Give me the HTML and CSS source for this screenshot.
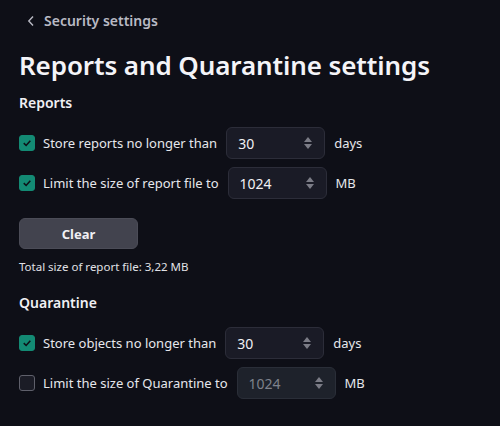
FILE: index.html
```html
<!DOCTYPE html>
<html>
<head>
<meta charset="utf-8">
<link rel="stylesheet" href="styles.css">
</head>
<body>
<div class="page">
  <div class="back">
    <svg class="chev" width="8" height="12" viewBox="0 0 8 12"><path d="M6 1.5 L1.8 6 L6 10.5" fill="none" stroke="#b9bac4" stroke-width="1.4"/></svg>
    <span>Security settings</span>
  </div>
  <h1 class="title">Reports and Quarantine settings</h1>

  <h2 class="section">Reports</h2>
  <div class="rows">
    <div class="row">
      <span class="cb on"><svg width="16" height="16" viewBox="0 0 16 16"><path d="M4.3 8.2 L7 10.8 L11.8 5.4" fill="none" stroke="#0e0f17" stroke-width="1.8"/></svg></span>
      <span class="label">Store reports no longer than</span>
      <span class="num"><span class="val">30</span><span class="spin"><i class="up"></i><i class="dn"></i></span></span>
      <span class="unit">days</span>
    </div>
    <div class="row">
      <span class="cb on"><svg width="16" height="16" viewBox="0 0 16 16"><path d="M4.3 8.2 L7 10.8 L11.8 5.4" fill="none" stroke="#0e0f17" stroke-width="1.8"/></svg></span>
      <span class="label">Limit the size of report file to</span>
      <span class="num"><span class="val">1024</span><span class="spin"><i class="up"></i><i class="dn"></i></span></span>
      <span class="unit">MB</span>
    </div>
  </div>
  <button class="btn">Clear</button>
  <div class="note">Total size of report file: 3,22 MB</div>

  <h2 class="section q">Quarantine</h2>
  <div class="rows">
    <div class="row">
      <span class="cb on"><svg width="16" height="16" viewBox="0 0 16 16"><path d="M4.3 8.2 L7 10.8 L11.8 5.4" fill="none" stroke="#0e0f17" stroke-width="1.8"/></svg></span>
      <span class="label">Store objects no longer than</span>
      <span class="num"><span class="val">30</span><span class="spin"><i class="up"></i><i class="dn"></i></span></span>
      <span class="unit">days</span>
    </div>
    <div class="row">
      <span class="cb"></span>
      <span class="label">Limit the size of Quarantine to</span>
      <span class="num dis"><span class="val">1024</span><span class="spin"><i class="up"></i><i class="dn"></i></span></span>
      <span class="unit">MB</span>
    </div>
  </div>
</div>
</body>
</html>
```

FILE: styles.css
```css
html, body {
  margin: 0;
  background: #0e0f17;
}
body {
  width: 500px;
  height: 426px;
  overflow: hidden;
  font-family: "Noto Sans", "Open Sans", sans-serif;
  color: #ecedf2;
}
.page {
  padding: 10px 19px 0 19px;
}
.back {
  display: flex;
  align-items: center;
  gap: 9px;
  height: 21px;
  padding-left: 8px;
  font-size: 14px;
  font-weight: 600;
  color: #b9bac4;
}
.title {
  margin: 16px 0 0 0;
  font-size: 26px;
  font-weight: 600;
  line-height: 36px;
  color: #f4f4f8;
  letter-spacing: -0.1px;
}
.section {
  margin: 10px 0 0 0;
  font-size: 14px;
  font-weight: 600;
  line-height: 20px;
  color: #f0f0f4;
}
.section.q {
  margin-top: 18px;
}
.rows {
  display: flex;
  flex-direction: column;
  gap: 8px;
  margin-top: 14px;
}
.row {
  display: flex;
  align-items: center;
  height: 32px;
  font-size: 13px;
  color: #e6e7ec;
}
.cb {
  width: 14px;
  height: 14px;
  border-radius: 3px;
  border: 1px solid #5f606b;
  background: #1b1c26;
  margin-right: 8px;
  display: flex;
  align-items: center;
  justify-content: center;
  box-sizing: content-box;
}
.cb.on {
  background: #138a74;
  border-color: #138a74;
}
.cb svg {
  display: block;
}
.label {
  margin-right: 9px;
}
.num {
  box-sizing: border-box;
  width: 99px;
  height: 32px;
  border: 1px solid #2c2d39;
  border-radius: 6px;
  background: #1a1b26;
  display: flex;
  align-items: center;
  padding: 0 12px 0 11px;
  justify-content: space-between;
  color: #f0f0f4;
  font-size: 14px;
}
.num.dis {
  background: #1e222b;
  border-color: #2a2e38;
  color: #7e828c;
}
.spin {
  display: flex;
  flex-direction: column;
  gap: 2px;
}
.spin i {
  display: block;
  width: 0;
  height: 0;
  border-left: 4px solid transparent;
  border-right: 4px solid transparent;
}
.spin .up {
  border-bottom: 5px solid #7b7c86;
}
.spin .dn {
  border-top: 5px solid #7b7c86;
}
.unit {
  margin-left: 9px;
}
.btn {
  display: block;
  margin-top: 19px;
  width: 119px;
  height: 31px;
  border: 1px solid #4b4c57;
  border-radius: 6px;
  background: #42434e;
  color: #f0f0f4;
  font-family: inherit;
  font-size: 13px;
  font-weight: 700;
  padding: 0;
}
.note {
  margin-top: 10px;
  font-size: 11.5px;
  line-height: 16px;
  color: #e0e1e6;
}
```
